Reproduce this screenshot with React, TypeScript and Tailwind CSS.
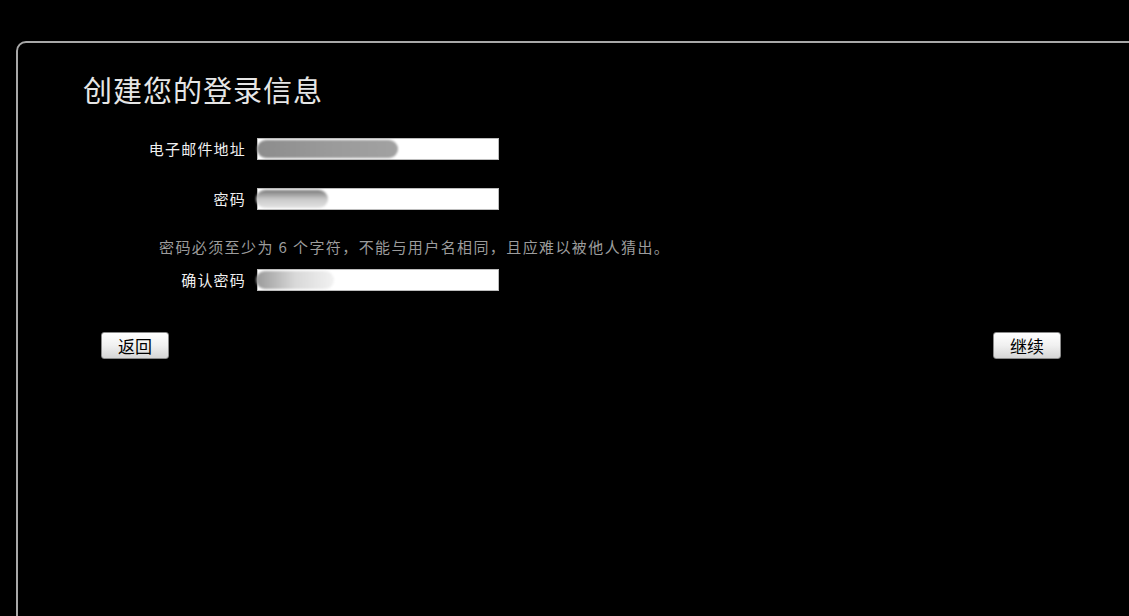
import React from 'react';

const fontCJK = { fontFamily: '"Noto Sans CJK SC", "Noto Sans", sans-serif' };

// blurred placeholder over filled-in field values
const Smudge = ({ className }: { className: string }) => (
  <div className={`absolute top-[1px] bottom-[1px] rounded-full blur-[1px] ${className}`} />
);

const Field = ({ label, children }: { label: string; children?: React.ReactNode }) => (
  <div className="flex items-center gap-[11px] ml-[66px] h-[22px]">
    <span className="w-[162px] text-right text-[15px] leading-[22px] text-[#f0f0f0] tracking-[1.2px]">{label}</span>
    <div className="relative w-[242px] h-[22px] bg-white border border-[#bdbdbd]">{children}</div>
  </div>
);

const PlainButton = ({ children }: { children: React.ReactNode }) => (
  <button className="w-[68px] h-[27px] rounded-[3px] border border-[#8a8a8a] bg-gradient-to-b from-[#ffffff] via-[#f0f0f0] to-[#d6d6d6] text-[17px] leading-[25px] text-black">
    {children}
  </button>
);

export default function App() {
  return (
    <div className="w-[1129px] h-[616px] overflow-hidden bg-black pt-[41px] pl-[16px]" style={fontCJK}>
      <div className="w-[1200px] h-[700px] border-2 border-[#a8a8a8] rounded-tl-[10px] bg-black">
        <h1 className="ml-[65px] pt-[28px] text-[29px] leading-[36px] font-normal text-[#e6e6e6] tracking-[1px]">
          创建您的登录信息
        </h1>

        <div className="mt-[31px]">
          <Field label="电子邮件地址">
            <Smudge className="-left-[1px] w-[141px] bg-gradient-to-r from-[#8c8c8c] via-[#9a9a9a] to-[#a2a2a2]" />
          </Field>

          <div className="mt-[28px]">
            <Field label="密码">
              <Smudge className="-left-[2px] w-[72px] bg-gradient-to-b from-[#7a7a7a] via-[#c9c9c9] to-[#e4e4e4]" />
            </Field>
          </div>

          <p className="mt-[27px] ml-[141px] text-[15px] leading-[20px] text-[#9c9c9c] tracking-[1.4px]">
            密码必须至少为 6 个字符，不能与用户名相同，且应难以被他人猜出。
          </p>

          <div className="mt-[12px]">
            <Field label="确认密码">
              <Smudge className="-left-[2px] w-[78px] bg-gradient-to-r from-[#9a9a9a] via-[#d8d8d8] to-[#f2f2f2]" />
            </Field>
          </div>
        </div>

        <div className="mt-[41px] ml-[83px] w-[960px] flex justify-between">
          <PlainButton>返回</PlainButton>
          <PlainButton>继续</PlainButton>
        </div>
      </div>
    </div>
  );
}
